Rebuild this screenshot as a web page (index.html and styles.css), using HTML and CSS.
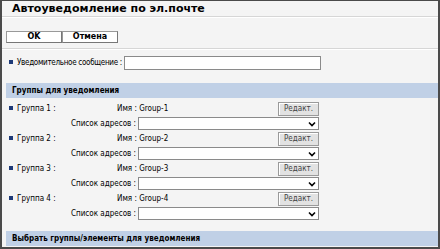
FILE: index.html
```html
<!DOCTYPE html>
<html>
<head>
<meta charset="utf-8">
<link rel="stylesheet" href="styles.css">
</head>
<body>
<div class="frame">
  <div class="title">Автоуведомление по эл.почте</div>
  <div class="actions">
    <button class="btn">OK</button><button class="btn">Отмена</button>
  </div>
  <div class="msg-row">
    <span class="lbl"><span class="bullet"></span>Уведомительное сообщение :</span>
    <input class="text-in" type="text">
  </div>
  <div class="section">Группы для уведомления</div>
  <div class="groups">
    <div class="group">
      <div class="row">
        <span class="g-name"><span class="bullet"></span>Группа 1 :</span>
        <span class="g-val">Имя : Group-1</span>
        <button class="edit">Редакт.</button>
      </div>
      <div class="row">
        <span class="g-sub">Список адресов :</span>
        <div class="select"><svg width="8" height="6" viewBox="0 0 8 6"><path d="M1 1.5 L4 4.5 L7 1.5" fill="none" stroke="#000" stroke-width="1.6"/></svg></div>
      </div>
    </div>
    <div class="group">
      <div class="row">
        <span class="g-name"><span class="bullet"></span>Группа 2 :</span>
        <span class="g-val">Имя : Group-2</span>
        <button class="edit">Редакт.</button>
      </div>
      <div class="row">
        <span class="g-sub">Список адресов :</span>
        <div class="select"><svg width="8" height="6" viewBox="0 0 8 6"><path d="M1 1.5 L4 4.5 L7 1.5" fill="none" stroke="#000" stroke-width="1.6"/></svg></div>
      </div>
    </div>
    <div class="group">
      <div class="row">
        <span class="g-name"><span class="bullet"></span>Группа 3 :</span>
        <span class="g-val">Имя : Group-3</span>
        <button class="edit">Редакт.</button>
      </div>
      <div class="row">
        <span class="g-sub">Список адресов :</span>
        <div class="select"><svg width="8" height="6" viewBox="0 0 8 6"><path d="M1 1.5 L4 4.5 L7 1.5" fill="none" stroke="#000" stroke-width="1.6"/></svg></div>
      </div>
    </div>
    <div class="group">
      <div class="row">
        <span class="g-name"><span class="bullet"></span>Группа 4 :</span>
        <span class="g-val">Имя : Group-4</span>
        <button class="edit">Редакт.</button>
      </div>
      <div class="row">
        <span class="g-sub">Список адресов :</span>
        <div class="select"><svg width="8" height="6" viewBox="0 0 8 6"><path d="M1 1.5 L4 4.5 L7 1.5" fill="none" stroke="#000" stroke-width="1.6"/></svg></div>
      </div>
    </div>
  </div>
  <div class="section last">Выбрать группы/элементы для уведомления</div>
</div>
</body>
</html>
```

FILE: styles.css
```css
* { box-sizing: border-box; }
html, body { margin: 0; padding: 0; }
body {
  width: 440px;
  height: 249px;
  overflow: hidden;
  font-family: "DejaVu Sans Condensed", "DejaVu Sans", sans-serif;
  font-stretch: condensed;
  font-size: 8px;
  color: #000;
}
.frame {
  width: 440px;
  height: 249px;
  background: #f4f4f4;
  border: 2px solid #4a4a4a;
  border-top-width: 1px;
  display: flex;
  flex-direction: column;
}
.title {
  height: 16px;
  padding-left: 10px;
  padding-top: 1px;
  font-family: "DejaVu Sans", sans-serif;
  font-stretch: normal;
  font-size: 11px;
  font-weight: bold;
  line-height: 14px;
  border-bottom: 1px solid #d6d6d6;
  box-shadow: 0 1px 0 #fff;
}
.actions {
  height: 32px;
  padding: 14px 0 0 4px;
  display: flex;
  border-bottom: 1px solid #d6d6d6;
  box-shadow: 0 1px 0 #fff;
}
.btn {
  width: 56px;
  height: 12px;
  padding: 0;
  margin: 0;
  background: #fff;
  border: 1px solid #999;
  border-right-color: #777;
  border-bottom-color: #777;
  font-family: "DejaVu Sans", sans-serif;
  font-size: 8px;
  font-weight: bold;
  line-height: 10px;
}
.msg-row {
  height: 34px;
  display: flex;
  align-items: flex-start;
  padding: 7px 0 0 7px;
}
.bullet {
  display: inline-block;
  width: 4px;
  height: 4px;
  background: #1e3a78;
  margin-right: 4px;
  vertical-align: 1px;
}
.lbl {
  width: 115px;
  line-height: 14px;
  white-space: nowrap;
  letter-spacing: -0.3px;
}
.text-in {
  width: 197px;
  height: 14px;
  margin: 0;
  border: 1px solid #8a8a8a;
  background: #fff;
  padding: 0;
}
.section {
  margin-left: 4px;
  height: 15px;
  background: #c0d0e6;
  font-weight: bold;
  line-height: 15px;
  padding-left: 6px;
}
.groups {
  padding-top: 3px;
  flex: 1;
}
.group { padding-left: 7px; }
.row {
  width: 310px;
  height: 15px;
  display: flex;
  align-items: center;
  white-space: nowrap;
}
.g-name { width: 108px; }
.g-val { flex: 1; }
.g-sub {
  width: 129px;
  text-align: right;
  padding-right: 2px;
}
.edit {
  width: 41px;
  height: 14px;
  padding: 0;
  margin: 0;
  background: #e2e2e2;
  border: 1px solid #9a9a9a;
  box-shadow: inset 1px 1px 0 #fff;
  font-family: "DejaVu Sans Condensed", "DejaVu Sans", sans-serif;
  font-size: 8px;
  color: #444;
  line-height: 12px;
}
.select {
  width: 181px;
  height: 13px;
  background: #fff;
  border: 1px solid #8a8a8a;
  display: flex;
  align-items: center;
  justify-content: flex-end;
  padding-right: 2px;
}
.select svg { display: block; }
.last { margin-bottom: 1px; }
```
